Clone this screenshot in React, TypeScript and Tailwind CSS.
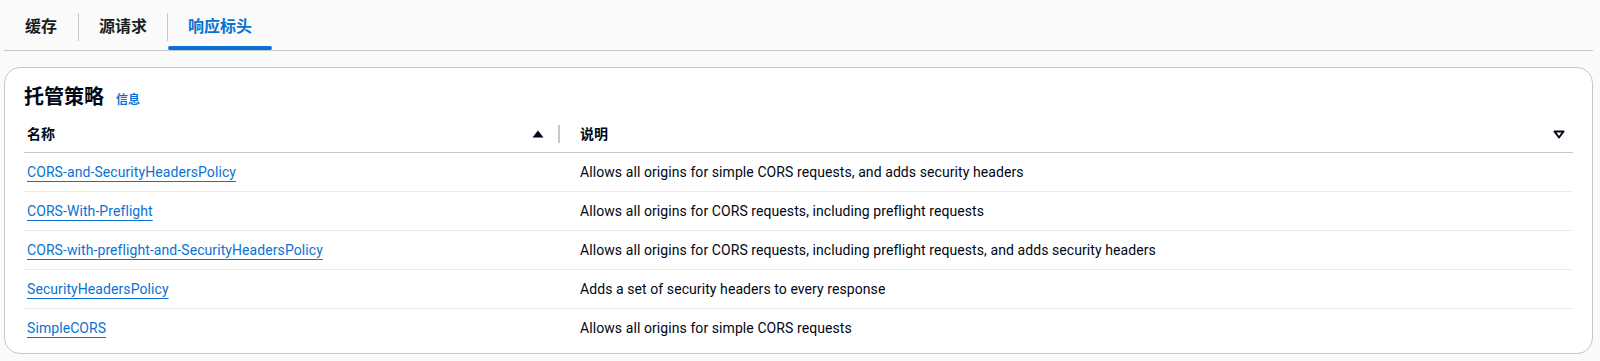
import React from "react";

const rows = [
  { name: "CORS-and-SecurityHeadersPolicy", desc: "Allows all origins for simple CORS requests, and adds security headers" },
  { name: "CORS-With-Preflight", desc: "Allows all origins for CORS requests, including preflight requests" },
  { name: "CORS-with-preflight-and-SecurityHeadersPolicy", desc: "Allows all origins for CORS requests, including preflight requests, and adds security headers" },
  { name: "SecurityHeadersPolicy", desc: "Adds a set of security headers to every response" },
  { name: "SimpleCORS", desc: "Allows all origins for simple CORS requests" },
];

const font = { fontFamily: "Roboto, 'Noto Sans CJK SC', sans-serif" };

export default function App() {
  return (
    <div
      className="w-[1600px] h-[361px] bg-[#fafafa] pl-[4px] pr-[7px] text-[#000716] font-['Roboto','Noto_Sans_CJK_SC',sans-serif]"
      style={font}
    >
      {/* Tabs */}
      <div className="flex items-stretch h-[51px] border-b border-[#c6c6cd]">
        <div className="flex items-center px-[21px] pt-[4px]">
          <span className="text-[16px] font-bold text-[#1a1d24]">缓存</span>
        </div>
        <div className="w-px bg-[#c6c6cd] my-[13px] mb-[9px]" />
        <div className="flex items-center px-[20px] pt-[4px]">
          <span className="text-[16px] font-bold text-[#1a1d24]">源请求</span>
        </div>
        <div className="w-px bg-[#c6c6cd] my-[13px] mb-[9px]" />
        <div className="relative flex items-center px-[20px] pt-[4px]">
          <span className="text-[16px] font-bold text-[#0972d3]">响应标头</span>
          <div className="absolute left-0 right-0 bottom-0 h-[4px] rounded-full bg-[#0972d3]" />
        </div>
      </div>

      {/* Card */}
      <div className="mt-[16px] bg-white border border-[#c6c6cd] rounded-[16px] pt-[15px] pb-[5px] px-[19px]">
        <div className="flex items-baseline gap-[12px]">
          <h2 className="text-[20px] leading-[28px] font-bold text-[#000716]">托管策略</h2>
          <span className="text-[12px] font-bold text-[#0972d3]">信息</span>
        </div>
        <div className="mt-[5px]">
          <div className="flex h-[37px] items-center border-b border-[#c6c6cd]">
            <div className="w-[536px] flex items-center pl-[3px] h-full">
              <span className="flex-1 text-[14px] font-bold">名称</span>
              <svg width="12" height="8" viewBox="0 0 12 8" className="mr-[14px]">
                <path d="M6 0.5 L11.5 7.5 H0.5 Z" fill="#000716" />
              </svg>
              <div className="w-[2px] h-[18px] bg-[#c6c6cd]" />
            </div>
            <div className="flex-1 flex items-center pl-[20px]">
              <span className="flex-1 text-[14px] font-bold">说明</span>
              <svg width="12" height="9" viewBox="0 0 12 9" className="mr-[8px]">
                <path d="M1.5 1.5 H10.5 L6 7.5 Z" fill="none" stroke="#000716" strokeWidth="2" strokeLinejoin="round" />
              </svg>
            </div>
          </div>
          {rows.map((r, i) => (
            <div
              key={r.name}
              className={`flex h-[39px] items-center text-[14px] tracking-[0.08px] ${i < rows.length - 1 ? "border-b border-[#e9ebed]" : ""}`}
            >
              <div className="w-[536px] pl-[3px]">
                <a
                  href="#"
                  className="text-[#0972d3] underline underline-offset-[4px] decoration-1"
                >
                  {r.name}
                </a>
              </div>
              <div className="flex-1 pl-[20px] text-[#000716]">{r.desc}</div>
            </div>
          ))}
        </div>
      </div>
    </div>
  );
}
